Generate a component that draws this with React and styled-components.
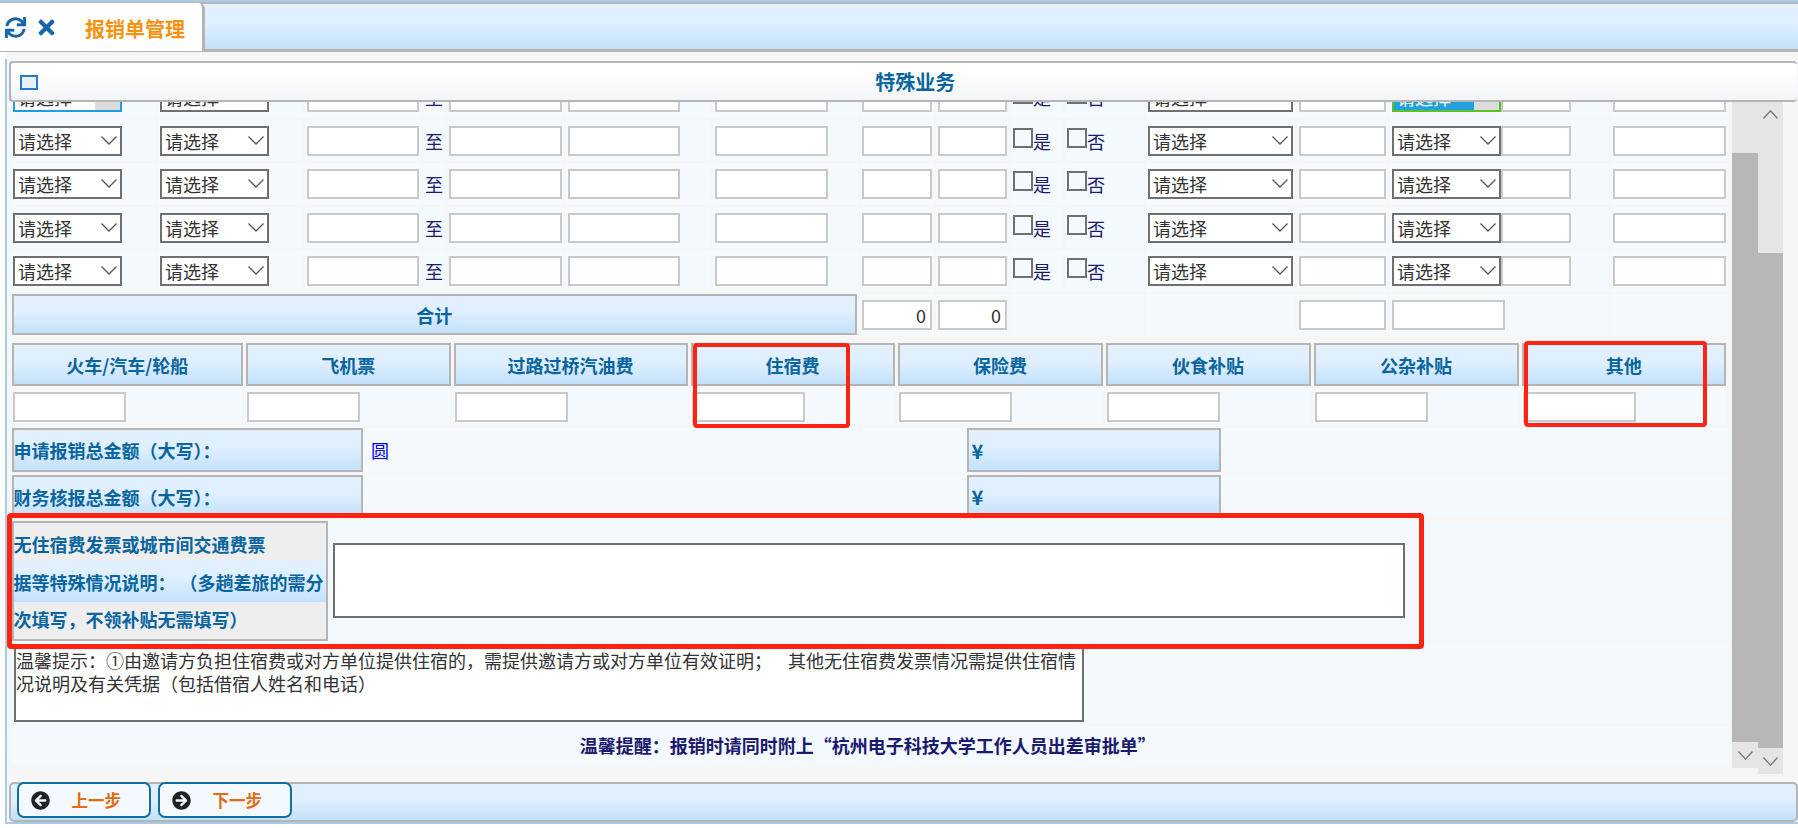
import React from 'react';
import styled, { createGlobalStyle, css } from 'styled-components';
import { FaSync, FaTimes, FaArrowCircleLeft, FaArrowCircleRight } from 'react-icons/fa';

const GlobalStyle = createGlobalStyle`
    html, body { margin: 0; padding: 0; background: #fff; }
    body { font-family: "Noto Sans CJK SC", "Noto Sans", sans-serif; overflow: hidden; }
    * { box-sizing: border-box; }
`;

const BLUE_GRADIENT = 'linear-gradient(to bottom, #e3f1ff 0%, #dfeffe 45%, #c3e1fc 100%)';
const LINE = '#b5b5b5';
const TEXT_BLUE = '#08659f';
const NAVY = '#1a1a6e';
const CELL = '#f3f9fd';

const Page = styled.div`
    position: relative;
    width: 1798px;
    height: 828px;
    overflow: hidden;
`;

const TopStrip = styled.div`
    height: 2px;
    background: #a9cbe6;
`;

const TabBar = styled.div`
    display: flex;
    height: 50px;
    background: ${BLUE_GRADIENT};
    border-top: 2px solid ${LINE};
    border-bottom: 3px solid ${LINE};
`;

const Tab = styled.div`
    display: flex;
    align-items: center;
    width: 205px;
    height: 48px;
    margin-top: -1px;
    padding-left: 5px;
    background: #fff;
    border-right: 3px solid ${LINE};
    border-radius: 0 6px 0 0;
    color: #1565ab;
`;

const CloseIcon = styled(FaTimes)`
    margin-left: 9px;
`;

const TabTitle = styled.span`
    margin-left: 27px;
    margin-top: 2px;
    font-size: 20px;
    font-weight: 700;
    color: #f7920f;
    white-space: nowrap;
`;

const Frame = styled.div`
    position: relative;
    display: flex;
    flex-direction: column;
    height: 769px;
    padding-top: 7px;
    background: linear-gradient(#f6f6f6, #f6f6f6) 5px 0 / 100% 100% no-repeat;
`;

const FrameInner = styled.div`
    position: relative;
    display: flex;
    flex-direction: column;
    height: 767px;
    margin-left: 5px;
    border-left: 2px solid #a9cbe6;
    border-bottom: 2px solid #a9cbe6;
`;

const Panel = styled.div`
    position: absolute;
    z-index: 3;
    top: 2px;
    left: 1.5px;
    width: 1788.5px;
    height: 41px;
    display: flex;
    align-items: center;
    padding-left: 9px;
    background: linear-gradient(to bottom, #ffffff 20%, #f3f5fa 100%);
    border: 2px solid ${LINE};
    border-right: none;
    border-radius: 4px;
`;

const PanelCheck = styled.span`
    width: 18px;
    height: 15px;
    margin-top: 1px;
    border: 2px solid #2a78c8;
    background: #e8f1fb;
    flex: none;
`;

const PanelTitle = styled.div`
    flex: 1;
    padding-right: 4px;
    text-align: center;
    font-size: 20px;
    font-weight: 700;
    color: ${TEXT_BLUE};
`;

const Body = styled.div`
    display: flex;
    height: 723px;
`;

const Form = styled.div`
    width: 1723px;
    padding-top: 17.25px;
    padding-left: 4px;
`;

const Row = styled.div`
    display: grid;
    grid-template-columns: 145px 145px 116px 22px 117px 145px 145px 74px 73px 52px 79px 149px 91px 219px 117px;
    column-gap: 2px;
    height: 41.5px;
    margin-bottom: 2px;
    ${p => p.$sum && css`
        margin-top: 1.5px;
        margin-bottom: 0;
    `}
`;

const Cell = styled.div`
    display: flex;
    align-items: center;
    padding-left: 2px;
    background: ${CELL};
    font-size: 18px;
    color: ${NAVY};
    min-width: 0;
    ${p => p.$span && css`
        grid-column: span ${p.$span};
    `}
`;

const GradientCell = styled.div`
    display: flex;
    align-items: center;
    justify-content: center;
    background: ${BLUE_GRADIENT};
    border: 2px solid ${LINE};
    font-size: 18px;
    font-weight: 700;
    color: ${TEXT_BLUE};
    white-space: nowrap;
`;

const SumTitle = styled(GradientCell)`
    grid-column: 1 / 8;
    margin-left: 0.5px;
    margin-right: 1px;
`;

const TextBox = styled.input`
    display: block;
    flex: none;
    width: ${p => p.$w || 113}px;
    height: 30px;
    padding: 0 4px 0 2px;
    background: #fff;
    border: 2px solid #c9c9c9;
    outline: none;
    border-radius: 0;
    font: inherit;
    font-size: 18px;
    color: #333;
    text-align: right;
`;

const SelectWrap = styled.div`
    position: relative;
    flex: none;
    width: ${p => p.$w || 109}px;
    height: 30px;
`;

const Select = styled.select`
    display: block;
    width: 100%;
    height: 100%;
    padding: 0 0 0 3px;
    appearance: none;
    background: #fff;
    border: 2px solid #707070;
    border-radius: 0;
    outline: none;
    font: inherit;
    font-size: 18px;
    color: #333;
    ${p => p.$state === 'blue' && css`
        border-color: #1e9fdc;
    `}
    ${p => p.$state === 'green' && css`
        border-color: #58c322;
        background: #24a0dc;
        color: #fff;
    `}
`;

const ArrowBlock = styled.span`
    position: absolute;
    top: 2px;
    right: 2px;
    bottom: 2px;
    width: 25px;
    background: #dcdcdc;
`;

const Chevron = styled.svg`
    position: absolute;
    top: 10px;
    right: 5px;
    width: 16px;
    height: 9px;
    fill: none;
    stroke: #555;
    stroke-width: 1.3;
`;

const Tick = styled.input`
    appearance: none;
    flex: none;
    width: 20px;
    height: 20px;
    margin: -6px 0 0 0;
    background: transparent;
    border: 2.5px solid #707070;
    border-radius: 0;
`;

const ButtonRow = styled.div`
    display: grid;
    grid-template-columns: 231.5px 204.5px 234px 204px 205px 205px 205px 204.7px;
    column-gap: 3px;
    margin: 7.75px 0 0 0.5px;
`;

const CostTitle = styled(GradientCell)`
    height: 43px;
    border-width: 2.5px;
`;

const CostCell = styled(Cell)`
    height: 36px;
    margin-top: 3px;
    padding-left: 1px;
`;

const AmountRow = styled.div`
    display: grid;
    grid-template-columns: 351.5px 603.5px 254px 506px;
    height: ${p => p.$h}px;
    margin: ${p => p.$top}px 0 0 0.5px;
    background: ${CELL};
`;

const AmountLabel = styled(GradientCell)`
    justify-content: flex-start;
    padding-left: ${p => (p.$yen ? '3px' : '0')};
    font-size: ${p => (p.$yen ? '20px' : '18px')};
`;

const Yuan = styled.span`
    padding-left: 8px;
    align-self: center;
    font-size: 18px;
    color: #0000f0;
`;

const ExplainRow = styled.div`
    display: grid;
    grid-template-columns: 316px 1fr;
    height: 119px;
    margin: 3px 0 0 0.5px;
    background: ${CELL};
`;

const ExplainLabel = styled.div`
    padding: 3px 0 0 0;
    border: 2px solid ${LINE};
    background: ${BLUE_GRADIENT} 0 37px / 100% 42px no-repeat, #eeeeee;
    font-size: 18px;
    font-weight: 700;
    line-height: 37.5px;
    color: ${TEXT_BLUE};
    white-space: pre;
`;

const ExplainBox = styled.textarea`
    display: block;
    width: 1072px;
    height: 75px;
    margin: 22px 0 0 5.5px;
    padding: 2px;
    background: #fff;
    border: 2px solid #707070;
    border-radius: 0;
    outline: none;
    resize: none;
`;

const NoteRow = styled.div`
    height: 82px;
    margin: 2px 0 0 0.5px;
    padding: 3px 0 0 2.5px;
    background: ${CELL};
`;

const NoteBox = styled.div`
    width: 1069.5px;
    height: 77px;
    padding: 2px 0 0 0;
    background: #fff;
    border: 2px solid #707070;
    font-size: 18px;
    line-height: 23px;
    color: #333;
    white-space: pre-wrap;
`;

const ReminderRow = styled.div`
    display: flex;
    align-items: center;
    justify-content: center;
    height: 38px;
    margin: 2px 0 0 0.5px;
    padding-right: 6px;
    background: ${CELL};
    font-size: 18px;
    font-weight: 700;
    color: ${NAVY};
`;

const Scrollbars = styled.div`
    display: flex;
    margin-left: 2px;
`;

const Scrollbar = styled.div`
    display: flex;
    flex-direction: column;
    width: ${p => p.$w}px;
    height: ${p => p.$h}px;
    margin-top: ${p => p.$top}px;
    background: #e5e5e5;
`;

const ScrollTrack = styled.div`
    display: flex;
    justify-content: center;
    flex: none;
    height: ${p => p.$h}px;
    padding-top: 9px;
`;

const ScrollThumb = styled.div`
    flex: 1;
    background: #b7b7b7;
`;

const ScrollEnd = styled.div`
    display: flex;
    align-items: center;
    justify-content: center;
    flex: none;
    height: 26px;
`;

const ScrollChevron = styled.svg`
    width: 15px;
    height: 9px;
    fill: none;
    stroke: #777;
    stroke-width: 1.3;
`;

const Footer = styled.div`
    display: flex;
    gap: 7px;
    height: 40px;
    margin-left: 1.5px;
    padding-left: 6px;
    background: ${BLUE_GRADIENT};
    border: 2px solid ${LINE};
    border-radius: 5px;
`;

const StepButton = styled.button`
    display: flex;
    align-items: center;
    width: 134px;
    height: 36px;
    margin-top: -2px;
    padding: 0 0 0 12px;
    background: #f3f9fe;
    border: 2px solid #0f6fa0;
    border-radius: 7px;
    color: #222;
    font: inherit;
`;

const StepLabel = styled.span`
    margin-left: 22px;
    font-size: 16.5px;
    font-weight: 700;
    color: #e56a10;
`;

const RedBox = styled.div`
    position: absolute;
    z-index: 5;
    left: ${p => p.$x}px;
    top: ${p => p.$y}px;
    width: ${p => p.$w}px;
    height: ${p => p.$h}px;
    border: ${p => p.$stroke || 4}px solid #ff2314;
    border-radius: 4px;
    pointer-events: none;
`;

const COSTS = ['火车/汽车/轮船', '飞机票', '过路过桥汽油费', '住宿费', '保险费', '伙食补贴', '公杂补贴', '其他'];

function ChoiceBox({ w, state }) {
    return (
        <SelectWrap $w={w}>
            <Select $state={state} defaultValue="">
                <option value="">请选择</option>
            </Select>
            {state ? <ArrowBlock /> : (
                <Chevron viewBox="0 0 16 9"><path d="M0.5 0.5 L8 8 L15.5 0.5" /></Chevron>
            )}
        </SelectWrap>
    );
}

function DetailRow({ first }) {
    return (
        <Row>
            <Cell><ChoiceBox state={first ? 'blue' : undefined} /></Cell>
            <Cell><ChoiceBox /></Cell>
            <Cell><TextBox $w={112} /></Cell>
            <Cell>至</Cell>
            <Cell><TextBox /></Cell>
            <Cell><TextBox $w={112} /></Cell>
            <Cell><TextBox /></Cell>
            <Cell><TextBox $w={70} /></Cell>
            <Cell><TextBox $w={69} /></Cell>
            <Cell><Tick type="checkbox" />是</Cell>
            <Cell><Tick type="checkbox" />否</Cell>
            <Cell><ChoiceBox w={144.5} /></Cell>
            <Cell><TextBox $w={87} /></Cell>
            <Cell>
                <ChoiceBox state={first ? 'green' : undefined} />
                <TextBox $w={70} />
            </Cell>
            <Cell><TextBox /></Cell>
        </Row>
    );
}

function ScrollPart({ w, h, top, head, up }) {
    return (
        <Scrollbar $w={w} $h={h} $top={top}>
            <ScrollTrack $h={head}>
                {up && <ScrollChevron viewBox="0 0 15 9"><path d="M0.5 8.5 L7.5 0.8 L14.5 8.5" /></ScrollChevron>}
            </ScrollTrack>
            <ScrollThumb />
            <ScrollEnd>
                <ScrollChevron viewBox="0 0 15 9"><path d="M0.5 0.5 L7.5 8.2 L14.5 0.5" /></ScrollChevron>
            </ScrollEnd>
        </Scrollbar>
    );
}

export default function App() {
    return (
        <Page>
            <GlobalStyle />
            <TopStrip />
            <TabBar>
                <Tab>
                    <FaSync size={21} />
                    <CloseIcon size={23} />
                    <TabTitle>报销单管理</TabTitle>
                </Tab>
            </TabBar>
            <Frame>
                <FrameInner>
                    <Panel>
                        <PanelCheck />
                        <PanelTitle>特殊业务</PanelTitle>
                    </Panel>
                    <Body>
                        <Form>
                            <DetailRow first />
                            <DetailRow />
                            <DetailRow />
                            <DetailRow />
                            <DetailRow />
                            <Row $sum>
                                <SumTitle>合计</SumTitle>
                                <Cell><TextBox $w={70} defaultValue="0" /></Cell>
                                <Cell><TextBox $w={69} defaultValue="0" /></Cell>
                                <Cell $span={2} />
                                <Cell />
                                <Cell><TextBox $w={87} /></Cell>
                                <Cell><TextBox /></Cell>
                                <Cell />
                            </Row>
                            <ButtonRow>
                                {COSTS.map(name => <CostTitle key={name}>{name}</CostTitle>)}
                                {COSTS.map(name => <CostCell key={name}><TextBox /></CostCell>)}
                            </ButtonRow>
                            <AmountRow $h={44} $top={3}>
                                <AmountLabel>申请报销总金额（大写）：</AmountLabel>
                                <Yuan>圆</Yuan>
                                <AmountLabel $yen>¥</AmountLabel>
                            </AmountRow>
                            <AmountRow $h={43} $top={3}>
                                <AmountLabel>财务核报总金额（大写）：</AmountLabel>
                                <span />
                                <AmountLabel $yen>¥</AmountLabel>
                            </AmountRow>
                            <ExplainRow>
                                <ExplainLabel>{'无住宿费发票或城市间交通费票\n据等特殊情况说明： （多趟差旅的需分\n次填写，不领补贴无需填写）'}</ExplainLabel>
                                <ExplainBox />
                            </ExplainRow>
                            <NoteRow>
                                <NoteBox>{'温馨提示：①由邀请方负担住宿费或对方单位提供住宿的，需提供邀请方或对方单位有效证明；    其他无住宿费发票情况需提供住宿情况说明及有关凭据（包括借宿人姓名和电话）'}</NoteBox>
                            </NoteRow>
                            <ReminderRow>温馨提醒：报销时请同时附上“杭州电子科技大学工作人员出差审批单”</ReminderRow>
                        </Form>
                        <Scrollbars>
                            <ScrollPart w={26} h={691} top={18} head={76} />
                            <ScrollPart w={25} h={673} top={42} head={152} up />
                        </Scrollbars>
                    </Body>
                    <Footer>
                        <StepButton>
                            <FaArrowCircleLeft size={19} />
                            <StepLabel>上一步</StepLabel>
                        </StepButton>
                        <StepButton>
                            <FaArrowCircleRight size={19} />
                            <StepLabel>下一步</StepLabel>
                        </StepButton>
                    </Footer>
                </FrameInner>
            </Frame>
            <RedBox $x={693} $y={343} $w={157} $h={85} />
            <RedBox $x={1523.5} $y={341} $w={183} $h={86} />
            <RedBox $x={7} $y={513} $w={1417} $h={136} $stroke={5} />
        </Page>
    );
}
